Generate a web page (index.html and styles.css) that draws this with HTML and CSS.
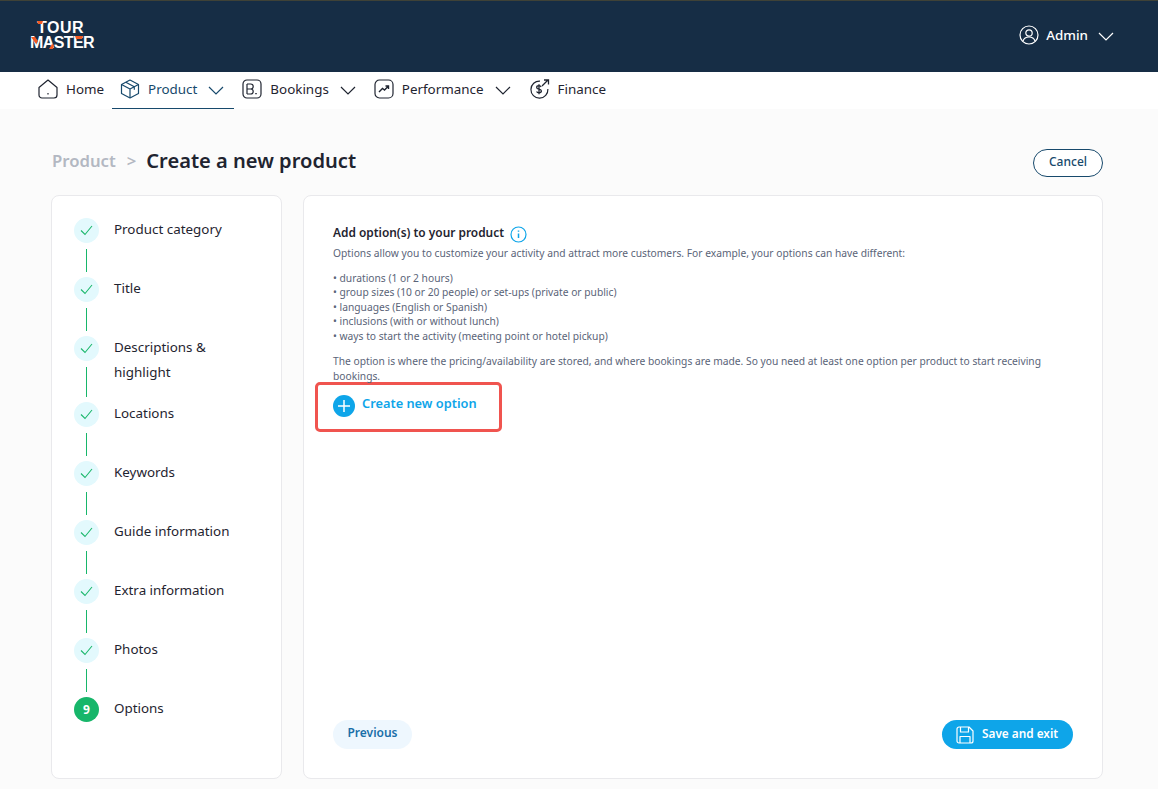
FILE: index.html
```html
<!DOCTYPE html>
<html lang="en">
<head>
<meta charset="utf-8">
<title>Create a new product</title>
<link rel="stylesheet" href="styles.css">
</head>
<body>
<header class="topbar">
  <div class="logo">
    <span class="logo-line">TOUR</span>
    <span class="logo-line logo-line-b">MASTER</span>
    <svg class="logo-accent" width="66" height="30" viewBox="0 0 66 30"><path d="M7 1h6l-1 3H8z" fill="#f15a24"/><path d="M1 17l4 0 3 4-2 3z" fill="#f15a24"/><path d="M19 29l3-5 2 1-1 4z" fill="#f15a24"/><path d="M45 16h8l-1 3h-6z" fill="#f15a24"/></svg>
  </div>
  <div class="user">
    <svg width="20" height="20" viewBox="0 0 20 20" fill="none" stroke="#fff" stroke-width="1.200"><circle cx="10" cy="10" r="9"/><circle cx="10" cy="8" r="3.200"/><path d="M4 16c1-3 3.500-4 6-4s5 1 6 4"/></svg>
    <span>Admin</span>
    <svg class="chev" width="16" height="9" viewBox="0 0 16 9" fill="none" stroke="#fff" stroke-width="1.200"><path d="M1 1l7 7 7-7"/></svg>
  </div>
</header>
<nav class="nav">
  <a class="nav-item">
    <svg width="20" height="20" viewBox="0 0 20 20" fill="none" stroke="#1f2430" stroke-width="1.200"><path d="M1 8.500L10 1l9 7.500V16a3 3 0 0 1-3 3H4a3 3 0 0 1-3-3z" stroke-linejoin="round"/><path d="M10 14v1.500"/></svg>
    <span>Home</span>
  </a>
  <a class="nav-item active">
    <svg width="20" height="20" viewBox="0 0 20 20" fill="none" stroke="#17496c" stroke-width="1.200" stroke-linejoin="round"><path d="M10 1l8.500 4.500v9L10 19l-8.500-4.500v-9z"/><path d="M1.500 5.500L10 10l8.500-4.500M10 10v9M5.800 3.300l8.500 4.500v3"/></svg>
    <span>Product</span>
    <svg class="chev" width="16" height="9" viewBox="0 0 16 9" fill="none" stroke="#17496c" stroke-width="1.200"><path d="M1 1l7 7 7-7"/></svg>
  </a>
  <a class="nav-item">
    <svg width="20" height="20" viewBox="0 0 20 20" fill="none" stroke="#1f2430" stroke-width="1.200"><rect x="1" y="1" width="18" height="18" rx="4"/><path d="M5 5v10M5 5h3.700a2.300 2.300 0 0 1 0 5H5M8.700 10a2.500 2.500 0 0 1 0 5H5"/><path d="M14 14v1.200" stroke-width="1.500"/></svg>
    <span>Bookings</span>
    <svg class="chev" width="16" height="9" viewBox="0 0 16 9" fill="none" stroke="#1f2430" stroke-width="1.200"><path d="M1 1l7 7 7-7"/></svg>
  </a>
  <a class="nav-item">
    <svg width="20" height="20" viewBox="0 0 20 20" fill="none" stroke="#1f2430" stroke-width="1.200"><rect x="1" y="1" width="18" height="18" rx="4.500"/><path d="M5 13l3.500-3.500 2 1.500L14 7.500M11.500 7H14.500V10" stroke-width="1.400"/></svg>
    <span>Performance</span>
    <svg class="chev" width="16" height="9" viewBox="0 0 16 9" fill="none" stroke="#1f2430" stroke-width="1.200"><path d="M1 1l7 7 7-7"/></svg>
  </a>
  <a class="nav-item nav-finance">
    <svg width="22" height="22" viewBox="0 0 22 22" fill="none" stroke="#1f2430" stroke-width="1.200"><path d="M12 3.100A8.500 8.500 0 1 0 19.900 11"/><path d="M14 8l6-6M16 2h4.500v4.500" stroke-width="1.300"/><path d="M13.200 9c-.5-1-1.300-1.300-2.300-1.300-1.300 0-2.200.7-2.200 1.700 0 2.400 4.700 1.200 4.700 3.700 0 1-1 1.700-2.400 1.700-1.100 0-2-.5-2.400-1.400M11 6.300v10" stroke-width="1.300"/></svg>
    <span>Finance</span>
  </a>
</nav>
<main class="page">
  <div class="title-row">
    <h1 class="crumbs"><span class="crumb-muted">Product</span><span class="crumb-sep">&gt;</span><span class="crumb-current">Create a new product</span></h1>
    <button class="btn-cancel">Cancel</button>
  </div>
  <div class="columns">
    <aside class="card steps">
      <div class="step"><div class="marker"><span class="dot"><svg width="13" height="11" viewBox="0 0 13 11" fill="none" stroke="#1cb86c" stroke-width="1.100"><path d="M1 5.500l4 4 7-8.500"/></svg></span><i class="line"></i></div><div class="label">Product category</div></div>
      <div class="step"><div class="marker"><span class="dot"><svg width="13" height="11" viewBox="0 0 13 11" fill="none" stroke="#1cb86c" stroke-width="1.100"><path d="M1 5.500l4 4 7-8.500"/></svg></span><i class="line"></i></div><div class="label">Title</div></div>
      <div class="step"><div class="marker"><span class="dot"><svg width="13" height="11" viewBox="0 0 13 11" fill="none" stroke="#1cb86c" stroke-width="1.100"><path d="M1 5.500l4 4 7-8.500"/></svg></span><i class="line"></i></div><div class="label">Descriptions &amp; highlight</div></div>
      <div class="step"><div class="marker"><span class="dot"><svg width="13" height="11" viewBox="0 0 13 11" fill="none" stroke="#1cb86c" stroke-width="1.100"><path d="M1 5.500l4 4 7-8.500"/></svg></span><i class="line"></i></div><div class="label">Locations</div></div>
      <div class="step"><div class="marker"><span class="dot"><svg width="13" height="11" viewBox="0 0 13 11" fill="none" stroke="#1cb86c" stroke-width="1.100"><path d="M1 5.500l4 4 7-8.500"/></svg></span><i class="line"></i></div><div class="label">Keywords</div></div>
      <div class="step"><div class="marker"><span class="dot"><svg width="13" height="11" viewBox="0 0 13 11" fill="none" stroke="#1cb86c" stroke-width="1.100"><path d="M1 5.500l4 4 7-8.500"/></svg></span><i class="line"></i></div><div class="label">Guide information</div></div>
      <div class="step"><div class="marker"><span class="dot"><svg width="13" height="11" viewBox="0 0 13 11" fill="none" stroke="#1cb86c" stroke-width="1.100"><path d="M1 5.500l4 4 7-8.500"/></svg></span><i class="line"></i></div><div class="label">Extra information</div></div>
      <div class="step"><div class="marker"><span class="dot"><svg width="13" height="11" viewBox="0 0 13 11" fill="none" stroke="#1cb86c" stroke-width="1.100"><path d="M1 5.500l4 4 7-8.500"/></svg></span><i class="line"></i></div><div class="label">Photos</div></div>
      <div class="step"><div class="marker"><span class="dot dot-current">9</span></div><div class="label">Options</div></div>
    </aside>
    <section class="card content">
      <div class="content-body">
        <h2 class="heading">Add option(s) to your product
          <svg class="info" width="17" height="17" viewBox="0 0 17 17" fill="none" stroke="#0ea5e9" stroke-width="1.200"><circle cx="8.500" cy="8.500" r="7.500"/><path d="M8.500 7.500v4.500M8.500 4.500v1.300" stroke-width="1.500"/></svg>
        </h2>
        <p class="para">Options allow you to customize your activity and attract more customers. For example, your options can have different:</p>
        <ul class="list">
          <li>• durations (1 or 2 hours)</li>
          <li>• group sizes (10 or 20 people) or set-ups (private or public)</li>
          <li>• languages (English or Spanish)</li>
          <li>• inclusions (with or without lunch)</li>
          <li>• ways to start the activity (meeting point or hotel pickup)</li>
        </ul>
        <p class="para">The option is where the pricing/availability are stored, and where bookings are made. So you need at least one option per product to start receiving bookings.</p>
        <div class="create-wrap">
          <span class="plus"><svg width="12" height="12" viewBox="0 0 12 12" stroke="#fff" stroke-width="1.500"><path d="M6 0v12M0 6h12"/></svg></span>
          <span class="create-text">Create new option</span>
        </div>
      </div>
      <div class="actions">
        <button class="btn-prev">Previous</button>
        <button class="btn-save">
          <svg width="18" height="18" viewBox="0 0 18 18" fill="none" stroke="#fff" stroke-width="1.200" stroke-linejoin="round"><path d="M1 3a2 2 0 0 1 2-2h10l4 4v10a2 2 0 0 1-2 2H3a2 2 0 0 1-2-2z"/><path d="M4.500 1v5h8V1M4 17v-6.500h10V17"/></svg>
          <span>Save and exit</span>
        </button>
      </div>
    </section>
  </div>
</main>
</body>
</html>
```
FILE: styles.css
```css
* { box-sizing: border-box; }
html, body { margin: 0; padding: 0; }
body {
  width: 1158px;
  height: 789px;
  overflow: hidden;
  background: #fbfbfb;
  color: #1f2430;
  font-family: "Noto Sans", "Open Sans", sans-serif;
}
.topbar {
  height: 72px;
  background: #162d45;
  border-top: 1px solid #3f4237;
  display: flex;
  align-items: center;
  justify-content: space-between;
  padding: 0 44px 4px 30px;
}
.logo {
  position: relative;
  width: 66px;
  height: 30px;
  font-family: "Liberation Sans", sans-serif;
  font-weight: 700;
  color: #fff;
  line-height: 15px;
  font-size: 16px;
}
.logo-line { display: block; padding-left: 7px; letter-spacing: 0.5px; }
.logo-line-b { padding: 0; letter-spacing: -0.6px; }
.logo-accent { position: absolute; left: 0; top: 0; }
.user {
  display: flex;
  align-items: center;
  gap: 7px;
  color: #fff;
  font-size: 13.400px;
  font-weight: 500;
}
.user .chev { margin-left: 3px; margin-top: 3px; }
.nav {
  height: 37px;
  background: #fff;
  display: flex;
  padding-left: 30px;
}
.nav-item {
  display: flex;
  align-items: center;
  gap: 8px;
  font-size: 13.400px;
  height: 37px;
  padding: 0 8px 4px 8px;
  color: #1f2430;
}
.nav-item .chev { margin-left: 3px; margin-top: 3px; }
.nav-item.active {
  color: #17496c;
  border-bottom: 1px solid #17496c;
  padding-bottom: 3px;
  padding-right: 10px;
}
.nav-item.active ~ .nav-item { padding-left: 9px; padding-right: 9px; }
.nav-item.active + .nav-item { padding-left: 8px; }
.nav-item.active ~ .nav-finance { padding-left: 8px; gap: 8px; }
.page { padding: 40px 55px 0 51px; }
.title-row {
  display: flex;
  align-items: center;
  justify-content: space-between;
  height: 27px;
}
.crumbs {
  margin: -5px 0 0 1px;
  font-size: 20.100px;
  font-weight: 600;
  color: #1f2430;
  display: flex;
  gap: 11px;
}
.crumb-muted { color: #b3b8c2; font-size: 16.700px; line-height: 27px; }
.crumb-sep { color: #b3b8c2; font-size: 16.700px; line-height: 27px; }
.crumb-current { margin-left: -1px; }
.btn-cancel {
  width: 70px;
  height: 28px;
  border: 1px solid #17496c;
  border-radius: 14px;
  background: #fff;
  color: #17496c;
  font: 500 12px "Noto Sans", sans-serif;
  padding: 0 0 2px;
}
.columns {
  display: flex;
  gap: 21px;
  margin-top: 19px;
  height: 584px;
}
.card {
  background: #fff;
  border: 1px solid #e9e9ec;
  border-radius: 8px;
}
.steps { width: 231px; padding: 22px 0 0 22px; }
.step { display: flex; gap: 15px; }
.marker {
  width: 25px;
  display: flex;
  flex-direction: column;
  align-items: center;
  flex: none;
}
.dot {
  width: 25px;
  height: 25px;
  border-radius: 50%;
  background: #e3f9fd;
  display: flex;
  align-items: center;
  justify-content: center;
  flex: none;
}
.dot-current { background: #17b66a; color: #fff; font-size: 12px; font-weight: 700; }
.line {
  display: block;
  width: 1px;
  background: #17b66a;
  flex: 1;
  margin: 6px 0 5px;
  min-height: 23px;
}
.label {
  font-size: 13.400px;
  line-height: 25px;
  width: 130px;
  margin-top: -1px;
  padding-bottom: 17px;
}
.content {
  width: 800px;
  padding: 27px 29px 29px 29px;
  display: flex;
  flex-direction: column;
}
.content-body { flex: 1; }
.heading {
  margin: 0 0 5px;
  font-size: 11.900px;
  font-weight: 600;
  line-height: 18px;
  display: flex;
  align-items: center;
  gap: 6px;
  color: #1f2430;
}
.info { margin: 2px 0 -2px; }
.para, .list {
  font-size: 10.250px;
  line-height: 14.500px;
  color: #5a6478;
  margin: 0;
  padding: 0;
  list-style: none;
}
.para { margin-top: 4px; }
.list { margin-top: 10px; margin-bottom: 11px; }
.create-wrap {
  margin-top: -1px;
  margin-left: -18px;
  width: 187px;
  height: 50px;
  border: 3px solid #f0544f;
  border-radius: 5px;
  background: #fff;
  display: flex;
  align-items: center;
  gap: 7px;
  padding: 0 0 3px 15px;
}
.plus {
  width: 22px;
  height: 22px;
  border-radius: 50%;
  background: #0ea5e9;
  display: flex;
  align-items: center;
  justify-content: center;
}
.create-text { color: #0ea5e9; font-size: 12.800px; font-weight: 600; margin-top: -5px; }
.actions {
  display: flex;
  justify-content: space-between;
  align-items: center;
  height: 29px;
}
.btn-prev {
  width: 79px;
  height: 29px;
  border: 0;
  border-radius: 15px;
  background: #eef7fe;
  color: #1a6fa8;
  font: 600 12px "Noto Sans", sans-serif;
  padding: 0 0 4px;
}
.btn-save {
  width: 131px;
  height: 29px;
  border: 0;
  border-radius: 15px;
  background: #0ea5e9;
  color: #fff;
  font: 600 11.800px "Noto Sans", sans-serif;
  display: flex;
  align-items: center;
  gap: 8px;
  padding: 0 0 0 14px;
}
.btn-save span { margin-top: -3px; }
```
